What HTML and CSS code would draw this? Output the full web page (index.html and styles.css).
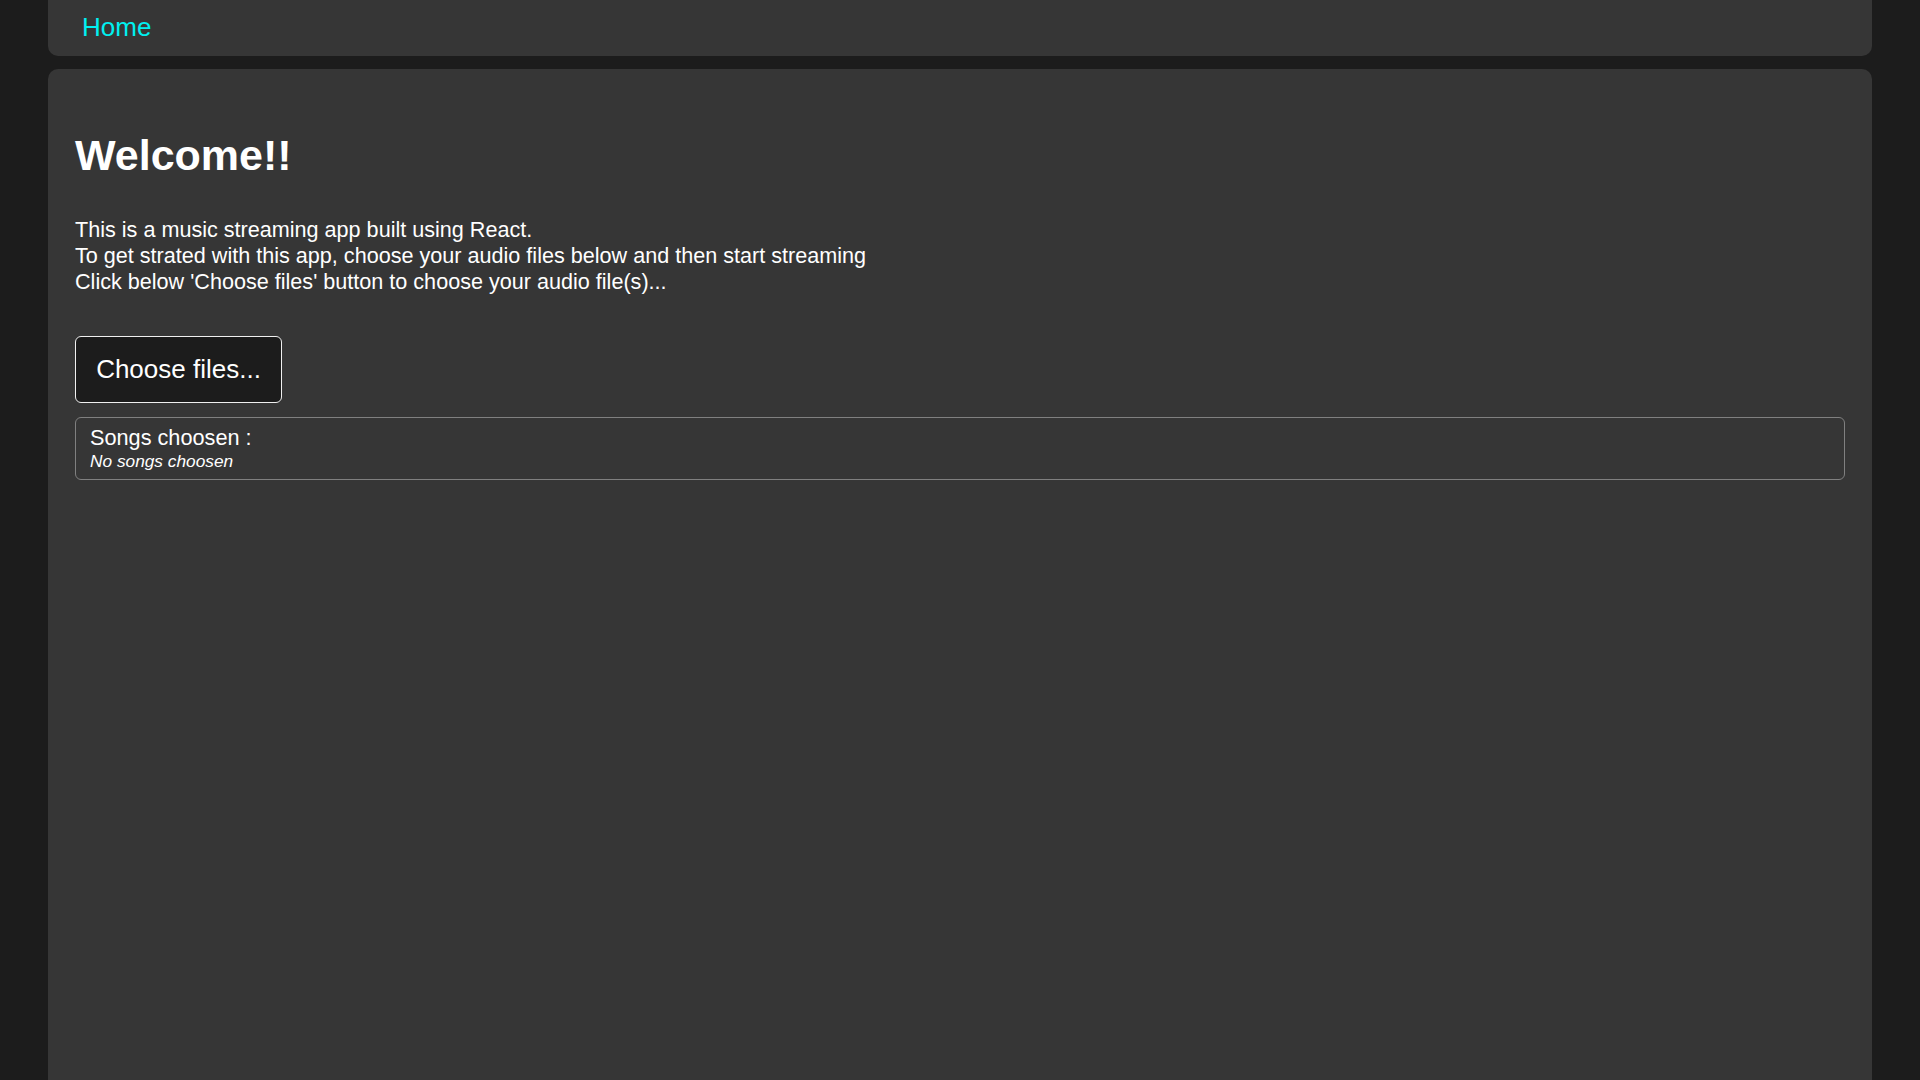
FILE: index.html
```html
<!DOCTYPE html>
<html lang="en">
<head>
	<meta charset="UTF-8">
	<title>Music Streaming</title>
<link rel="stylesheet" href="styles.css">
</head>
<body>
	<div class='app'>
		<div class='navBar'>
			<a class='navLink' href='#'>Home</a>
		</div>
		<div class='mainPanel'>
			<h1 class='title'>Welcome!!</h1>
			<p class='intro'>
				This is a music streaming app built using React.<br>
				To get strated with this app, choose your audio files below and then start streaming<br>
				Click below 'Choose files' button to choose your audio file(s)...
			</p>
			<button class='chooseBtn'>Choose files...</button>
			<div class='songList'>
				<div class='songListTitle'>Songs choosen :</div>
				<div class='songListEmpty'>No songs choosen</div>
			</div>
		</div>
	</div>
</body>
</html>
```

FILE: styles.css
```css
html,body{
	margin:0;
	height:100%;
}
body{
	background:#1c1c1c;
	color:#fff;
	font-family:"Liberation Sans", Arial, sans-serif;
}
.app{
	display:flex;
	flex-direction:column;
	gap:13px;
	height:100%;
	padding:0 48px;
	box-sizing:border-box;
}
.navBar{
	height:56px;
	background:#363636;
	border-radius:0 0 10px 10px;
	padding-left:34px;
	box-sizing:border-box;
	display:flex;
	align-items:center;
}
.navLink{
	color:#00f0f0;
	text-decoration:none;
	font-size:26px;
	margin-top:-2px;
}
.mainPanel{
	flex:1;
	background:#363636;
	border-radius:10px 10px 0 0;
	padding:0 27px;
}
.title{
	margin:59px 0 0;
	font-size:43px;
	line-height:54px;
}
.intro{
	margin:35px 0 0;
	font-size:21.6px;
	line-height:26px;
}
.chooseBtn{
	display:block;
	margin-top:41px;
	width:207px;
	height:67px;
	background:#1c1c1c;
	color:#fff;
	border:1px solid #f0f0f0;
	border-radius:6px;
	font-family:inherit;
	font-size:26px;
	padding:0;
}
.songList{
	margin-top:14px;
	border:1px solid #808080;
	border-radius:6px;
	padding:7px 14px 9px;
	height:63px;
	box-sizing:border-box;
}
.songListTitle{
	font-size:21.7px;
	line-height:26px;
}
.songListEmpty{
	font-size:17.3px;
	font-style:italic;
	line-height:20px;
}
```
